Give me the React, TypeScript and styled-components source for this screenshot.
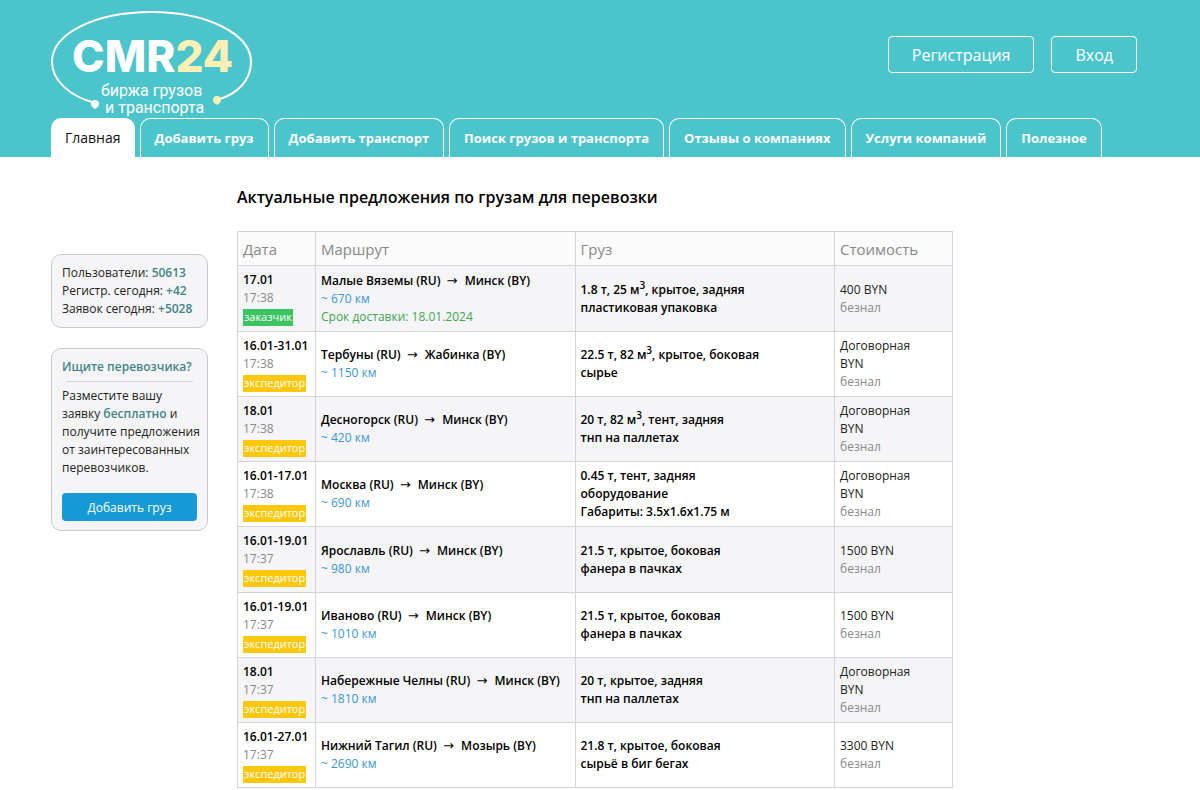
import React from 'react';
import styled, { createGlobalStyle } from 'styled-components';

const GlobalStyle = createGlobalStyle`
  *, *::before, *::after { box-sizing: border-box; }
  body {
    margin: 0;
    background: #fff;
    color: #222;
    font-family: "Open Sans", "Noto Sans", sans-serif;
    font-size: 12px;
    line-height: 18px;
  }
`;

const Header = styled.header`
  background: #4bc5cb;
`;

const HeaderInner = styled.div`
  max-width: 1200px;
  margin: 0 auto;
  padding: 0 51px;
`;

const HeaderTop = styled.div`
  display: flex;
  justify-content: space-between;
  align-items: flex-start;
  height: 118px;
`;

const LogoLink = styled.a`
  display: block;
  margin-top: 10px;

  svg {
    display: block;
    overflow: visible;
  }
`;

const AuthButtons = styled.div`
  display: flex;
  gap: 17px;
  margin: 36px 12px 0 0;
`;

const AuthButton = styled.button`
  height: 37px;
  padding: 0 23px;
  border: 1px solid #fff;
  border-radius: 4px;
  background: transparent;
  color: #fff;
  font: 16px "Open Sans", sans-serif;
  cursor: pointer;
`;

const Tabs = styled.nav`
  display: flex;
  gap: 5px;
`;

const Tab = styled.a<{ $active?: boolean }>`
  height: 39px;
  padding: 0 14px;
  border: ${(p) => (p.$active ? 0 : '1px solid #fff')};
  border-bottom: 0;
  border-radius: 10px 10px 0 0;
  background: ${(p) => (p.$active ? '#fff' : 'transparent')};
  color: ${(p) => (p.$active ? '#111' : '#fff')};
  font-size: ${(p) => (p.$active ? 14 : 13)}px;
  font-weight: ${(p) => (p.$active ? 400 : 700)};
  line-height: 39px;
  white-space: nowrap;
  text-decoration: none;
`;

const Page = styled.div`
  display: grid;
  grid-template-columns: 157px minmax(0, 1fr) 167px;
  column-gap: 29px;
  max-width: 1200px;
  margin: 0 auto;
  padding: 0 51px;
`;

const Sidebar = styled.aside`
  display: flex;
  flex-direction: column;
  gap: 20px;
  padding-top: 97px;
`;

const Card = styled.section`
  padding: 9px 10px;
  border: 1px solid #c9cacc;
  border-radius: 10px;
  background: #f5f5f7;
`;

const StatLine = styled.div`
  white-space: nowrap;
`;

const Accent = styled.strong`
  color: #428585;
  font-weight: 600;
`;

const CardTitle = styled.h2`
  margin: 0 0 5px;
  color: #428585;
  font-size: 12px;
  font-weight: 650;
  line-height: 18px;
  white-space: nowrap;
`;

const Divider = styled.hr`
  margin: 0 4px 5px;
  border: 0;
  border-top: 1px solid #d3d5d9;
`;

const CardText = styled.p`
  margin: 0 0 16px;
  white-space: nowrap;
`;

const AddButton = styled.button`
  display: block;
  width: 100%;
  height: 28px;
  border: 0;
  border-radius: 4px;
  background: #159ad6;
  color: #fff;
  font: 12px "Open Sans", sans-serif;
  cursor: pointer;
`;

const Main = styled.main`
  padding-top: 28px;
`;

const Title = styled.h1`
  margin: 0 0 22px;
  color: #000;
  font-size: 16px;
  font-weight: 650;
  line-height: 24px;
`;

const Table = styled.table`
  width: 100%;
  border-collapse: collapse;
  table-layout: fixed;
`;

const HeadCell = styled.th<{ $width?: number }>`
  width: ${(p) => (p.$width ? `${p.$width}px` : 'auto')};
  height: 34px;
  padding: 0 4px 0 5px;
  border: 1px solid #d3d5d9;
  background: #fbfbfc;
  color: #888;
  font-size: 15px;
  font-weight: 400;
  text-align: left;
`;

const Row = styled.tr`
  height: 65px;
  background: #fff;

  &:nth-child(odd) { background: #f5f5f7; }
  &:nth-child(4n + 1) { height: 66px; }
`;

const Cell = styled.td<{ $bold?: boolean }>`
  padding: 0 4px 0 5px;
  border: 1px solid #d3d5d9;
  color: ${(p) => (p.$bold ? '#000' : '#222')};
  font-weight: ${(p) => (p.$bold ? 650 : 400)};
  vertical-align: middle;
`;

const Line = styled.div<{ $tone?: string }>`
  color: ${(p) => p.$tone ?? 'inherit'};
  font-weight: ${(p) => (p.$tone ? 400 : 'inherit')};
  white-space: nowrap;
`;

const Arrow = styled.span`
  margin: 0 4px 0 3px;
  font-family: "DejaVu Sans", sans-serif;
  font-size: 13px;
  font-weight: 400;
  line-height: 1;
`;

const Cube = styled.sup`
  font-size: 10px;
  line-height: 0;
`;

const Tag = styled.span<{ $customer?: boolean }>`
  display: block;
  width: fit-content;
  height: 17px;
  margin-top: 2px;
  padding: 0 1px;
  background: ${(p) => (p.$customer ? '#3cc45f' : '#fdc70c')};
  color: #fff;
  font-size: 11px;
  font-weight: 400;
  line-height: 16px;
  white-space: nowrap;
`;

const GREY = '#888';
const BLUE = '#3b97d3';
const GREEN = '#3fa653';

interface Offer {
  date: string;
  time: string;
  customer?: boolean;
  from: string;
  to: string;
  km: number;
  due?: string;
  weight: string;
  volume?: string;
  body: string;
  goods: string[];
  price: string[];
}

const offers: Offer[] = [
  { date: '17.01', time: '17:38', customer: true, from: 'Малые Вяземы (RU)', to: 'Минск (BY)', km: 670, due: '18.01.2024', weight: '1.8 т', volume: '25', body: 'крытое, задняя', goods: ['пластиковая упаковка'], price: ['400 BYN'] },
  { date: '16.01-31.01', time: '17:38', from: 'Тербуны (RU)', to: 'Жабинка (BY)', km: 1150, weight: '22.5 т', volume: '82', body: 'крытое, боковая', goods: ['сырье'], price: ['Договорная', 'BYN'] },
  { date: '18.01', time: '17:38', from: 'Десногорск (RU)', to: 'Минск (BY)', km: 420, weight: '20 т', volume: '82', body: 'тент, задняя', goods: ['тнп на паллетах'], price: ['Договорная', 'BYN'] },
  { date: '16.01-17.01', time: '17:38', from: 'Москва (RU)', to: 'Минск (BY)', km: 690, weight: '0.45 т', body: 'тент, задняя', goods: ['оборудование', 'Габариты: 3.5x1.6x1.75 м'], price: ['Договорная', 'BYN'] },
  { date: '16.01-19.01', time: '17:37', from: 'Ярославль (RU)', to: 'Минск (BY)', km: 980, weight: '21.5 т', body: 'крытое, боковая', goods: ['фанера в пачках'], price: ['1500 BYN'] },
  { date: '16.01-19.01', time: '17:37', from: 'Иваново (RU)', to: 'Минск (BY)', km: 1010, weight: '21.5 т', body: 'крытое, боковая', goods: ['фанера в пачках'], price: ['1500 BYN'] },
  { date: '18.01', time: '17:37', from: 'Набережные Челны (RU)', to: 'Минск (BY)', km: 1810, weight: '20 т', body: 'крытое, задняя', goods: ['тнп на паллетах'], price: ['Договорная', 'BYN'] },
  { date: '16.01-27.01', time: '17:37', from: 'Нижний Тагил (RU)', to: 'Мозырь (BY)', km: 2690, weight: '21.8 т', body: 'крытое, боковая', goods: ['сырьё в биг бегах'], price: ['3300 BYN'] },
];

const tabs = [
  'Главная',
  'Добавить груз',
  'Добавить транспорт',
  'Поиск грузов и транспорта',
  'Отзывы о компаниях',
  'Услуги компаний',
  'Полезное',
];

function Logo() {
  return (
    <LogoLink href="#">
      <svg width="202" height="108" viewBox="0 0 202 108">
        <path
          d="M44 93 C18 86 1 70 1 52 C1 23 45 2 100.500 2 C156 2 200 24 200 52 C200 70 187 84 166 90"
          fill="none"
          stroke="#fff"
          strokeWidth="2"
        />
        <path d="M44 90 a4 4 0 0 1 4 4 c0 2-2 4-4 5 c-2-1-4-3-4-5 a4 4 0 0 1 4-4z" fill="#fff" />
        <path d="M166 86 a4 4 0 0 1 4 4 c0 2-2 4-4 5 c-2-1-4-3-4-5 a4 4 0 0 1 4-4z" fill="#ffefb5" />
        <text x="21" y="62" fill="#fff" fontFamily="Inter, sans-serif" fontWeight="800" fontSize="44">
          CMR<tspan fill="#ffefb5">24</tspan>
        </text>
        <text x="50" y="86" fill="#fff" fontFamily="Roboto, sans-serif" fontSize="16">биржа грузов</text>
        <text x="54" y="103" fill="#fff" fontFamily="Roboto, sans-serif" fontSize="16">и транспорта</text>
      </svg>
    </LogoLink>
  );
}

function OfferRow({ offer }: { offer: Offer }) {
  return (
    <Row>
      <Cell $bold>
        <Line>{offer.date}</Line>
        <Line $tone={GREY}>{offer.time}</Line>
        <Tag $customer={offer.customer}>{offer.customer ? 'заказчик' : 'экспедитор'}</Tag>
      </Cell>
      <Cell $bold>
        <Line>
          {offer.from} <Arrow>→</Arrow> {offer.to}
        </Line>
        <Line $tone={BLUE}>~ {offer.km} км</Line>
        {offer.due && <Line $tone={GREEN}>Срок доставки: {offer.due}</Line>}
      </Cell>
      <Cell $bold>
        <Line>
          {offer.weight}
          {offer.volume && <>, {offer.volume} м<Cube>3</Cube></>}, {offer.body}
        </Line>
        {offer.goods.map((g) => <Line key={g}>{g}</Line>)}
      </Cell>
      <Cell>
        {offer.price.map((p) => <Line key={p}>{p}</Line>)}
        <Line $tone={GREY}>безнал</Line>
      </Cell>
    </Row>
  );
}

export default function App() {
  return (
    <>
      <GlobalStyle />
      <Header>
        <HeaderInner>
          <HeaderTop>
            <Logo />
            <AuthButtons>
              <AuthButton type="button">Регистрация</AuthButton>
              <AuthButton type="button">Вход</AuthButton>
            </AuthButtons>
          </HeaderTop>
          <Tabs>
            {tabs.map((t, i) => <Tab key={t} href="#" $active={i === 0}>{t}</Tab>)}
          </Tabs>
        </HeaderInner>
      </Header>
      <Page>
        <Sidebar>
          <Card>
            <StatLine>Пользователи: <Accent>50613</Accent></StatLine>
            <StatLine>Регистр. сегодня: <Accent>+42</Accent></StatLine>
            <StatLine>Заявок сегодня: <Accent>+5028</Accent></StatLine>
          </Card>
          <Card>
            <CardTitle>Ищите перевозчика?</CardTitle>
            <Divider />
            <CardText>
              Разместите вашу<br />
              заявку <Accent>бесплатно</Accent> и<br />
              получите предложения<br />
              от заинтересованных<br />
              перевозчиков.
            </CardText>
            <AddButton type="button">Добавить груз</AddButton>
          </Card>
        </Sidebar>
        <Main>
          <Title>Актуальные предложения по грузам для перевозки</Title>
          <Table>
            <thead>
              <tr>
                <HeadCell $width={78}>Дата</HeadCell>
                <HeadCell>Маршрут</HeadCell>
                <HeadCell>Груз</HeadCell>
                <HeadCell $width={118}>Стоимость</HeadCell>
              </tr>
            </thead>
            <tbody>
              {offers.map((o, i) => <OfferRow key={i} offer={o} />)}
            </tbody>
          </Table>
        </Main>
      </Page>
    </>
  );
}
